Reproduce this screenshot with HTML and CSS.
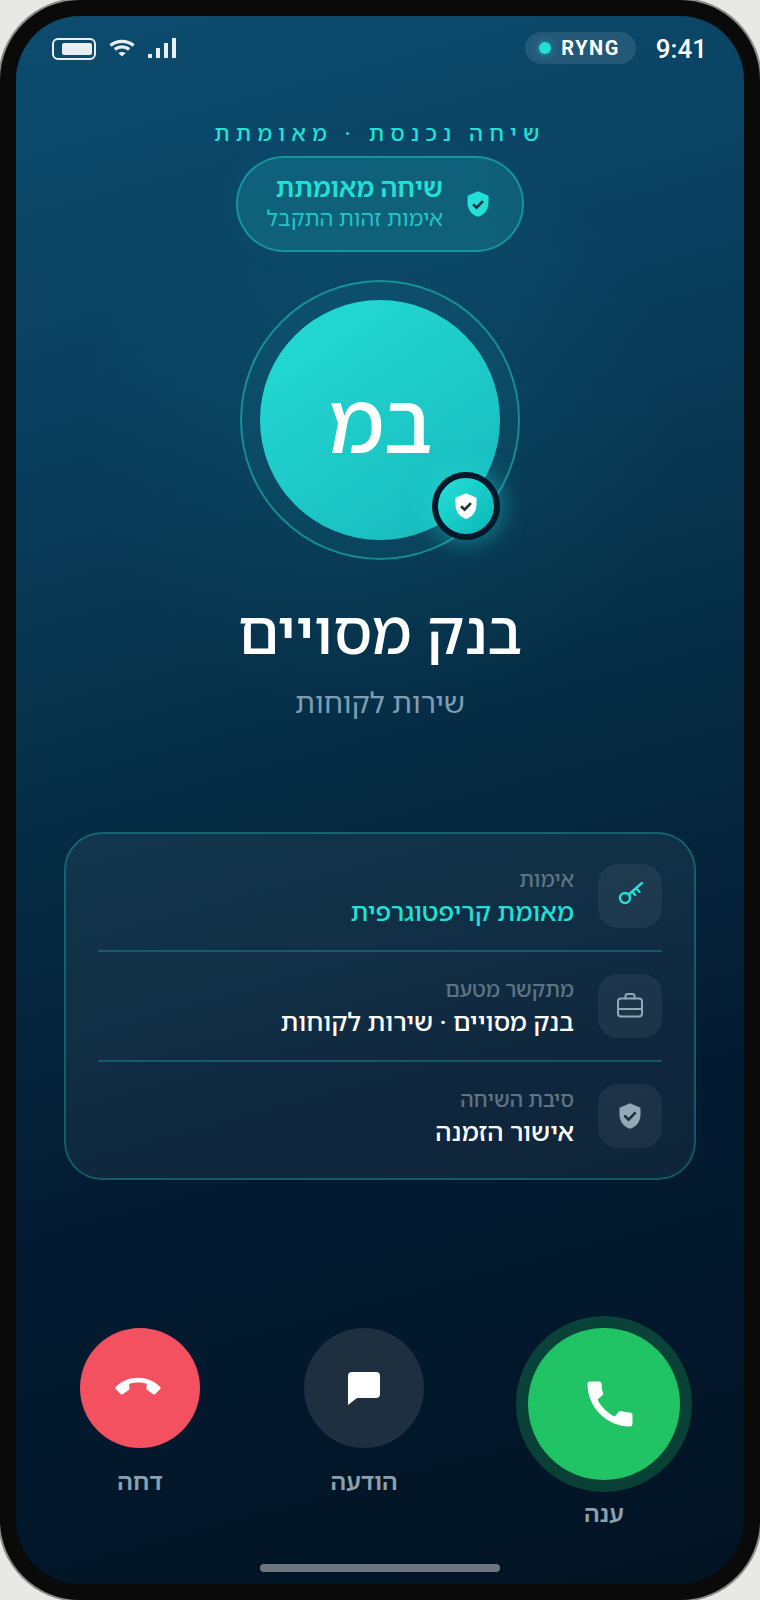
FILE: index.html
```html
<!DOCTYPE html>
<html lang="he" dir="rtl">
<head>
  <meta charset="UTF-8" />
  <title>שיחה נכנסת</title>
  <link rel="stylesheet" href="styles.css">
</head>
<body>
  <div class="phone">
    <div class="screen">
      <div class="status-bar">
        <span class="time">9:41</span>
        <div class="ryng-pill" dir="ltr">
          <span class="ryng-dot"></span>
          <span class="ryng-name">RYNG</span>
        </div>
        <div class="status-icons" dir="ltr">
          <div class="battery"><span class="battery-level"></span></div>
          <svg class="wifi" width="26" height="18" viewBox="0 0 26 18">
            <path d="M1.5 6.6C7.8 1 18.2 1 24.500 6.6" />
            <path d="M5.800 10.400C10 7 16 7 20.200 10.400" />
            <path class="wifi-dot" d="M13 17.500L9.300 14C11.500 12.500 14.500 12.500 16.700 14Z" />
          </svg>
          <div class="signal">
            <span class="bar bar-1"></span>
            <span class="bar bar-2"></span>
            <span class="bar bar-3"></span>
            <span class="bar bar-4"></span>
          </div>
        </div>
      </div>

      <div class="eyebrow">שיחה נכנסת · מאומתת</div>

      <div class="verified-pill">
        <svg class="shield" width="28" height="28" viewBox="0 0 24 24">
          <path class="shield-body" d="M12 1L3 5v6c0 5.550 3.840 10.740 9 12 5.160-1.260 9-6.450 9-12V5z" />
          <path class="shield-check" d="M7.800 12.200l3 3 5.400-5.600" />
        </svg>
        <div class="verified-text">
          <div class="verified-title">שיחה מאומתת</div>
          <div class="verified-sub">אימות זהות התקבל</div>
        </div>
      </div>

      <div class="avatar-ring">
        <div class="avatar">במ</div>
        <div class="avatar-badge">
          <svg class="shield" width="28" height="28" viewBox="0 0 24 24">
            <path class="badge-shield" d="M12 1L3 5v6c0 5.550 3.840 10.740 9 12 5.160-1.260 9-6.450 9-12V5z" />
            <path class="shield-check" d="M7.800 12.200l3 3 5.400-5.600" />
          </svg>
        </div>
      </div>

      <div class="caller-name">בנק מסויים</div>
      <div class="caller-role">שירות לקוחות</div>

      <div class="info-card">
        <div class="info-row">
          <div class="info-icon">
            <svg width="28" height="28" viewBox="0 0 28 28" class="icon-teal">
              <circle cx="9" cy="16" r="5" />
              <path d="M12.700 12.500L26 1M20 6l3.400 3.800M16 9.500l3.200 3.400" />
            </svg>
          </div>
          <div class="info-text">
            <div class="info-label">אימות</div>
            <div class="info-value teal">מאומת קריפטוגרפית</div>
          </div>
        </div>
        <div class="info-row">
          <div class="info-icon">
            <svg width="28" height="28" viewBox="0 0 28 28" class="icon-grey">
              <rect x="2" y="6.500" width="24" height="18" rx="3" />
              <path d="M2 17h24M9.500 6.500V4a2 2 0 0 1 2-2h5a2 2 0 0 1 2 2v2.500" />
            </svg>
          </div>
          <div class="info-text">
            <div class="info-label">מתקשר מטעם</div>
            <div class="info-value">בנק מסויים · שירות לקוחות</div>
          </div>
        </div>
        <div class="info-row">
          <div class="info-icon">
            <svg width="28" height="28" viewBox="0 0 24 24">
              <path class="grey-shield" d="M12 1L3 5v6c0 5.550 3.840 10.740 9 12 5.160-1.260 9-6.450 9-12V5z" />
              <path class="shield-check" d="M7.800 12.200l3 3 5.400-5.600" />
            </svg>
          </div>
          <div class="info-text">
            <div class="info-label">סיבת השיחה</div>
            <div class="info-value">אישור הזמנה</div>
          </div>
        </div>
      </div>

      <div class="actions">
        <div class="action">
          <div class="action-btn answer">
            <svg width="60" height="60" viewBox="-2.400 0 24 24">
              <path class="fill-white" d="M20.010 15.380c-1.230 0-2.420-.2-3.530-.56-.35-.12-.74-.03-1.010.24l-1.570 1.970c-2.830-1.350-5.480-3.900-6.890-6.830l1.950-1.660c.27-.28.35-.67.24-1.020-.37-1.110-.56-2.300-.56-3.530 0-.54-.45-.99-.99-.99H4.190C3.650 3 3 3.240 3 3.990 3 13.280 10.730 21 20.010 21c.71 0 .99-.63.99-1.180v-3.450c0-.54-.45-.99-.99-.99z" />
            </svg>
          </div>
          <span class="action-label">ענה</span>
        </div>
        <div class="action">
          <div class="action-btn message">
            <svg width="32" height="33" viewBox="0 0 32 33">
              <path class="fill-white" d="M4 0h24a4 4 0 0 1 4 4v18a4 4 0 0 1-4 4H9l-9 7V4a4 4 0 0 1 4-4z" />
            </svg>
          </div>
          <span class="action-label">הודעה</span>
        </div>
        <div class="action">
          <div class="action-btn decline">
            <svg class="hangup" width="44" height="44" viewBox="0 0 24 24">
              <path class="fill-white" d="M20.010 15.380c-1.230 0-2.420-.2-3.530-.56-.35-.12-.74-.03-1.010.24l-1.570 1.970c-2.830-1.350-5.480-3.900-6.890-6.830l1.950-1.660c.27-.28.35-.67.24-1.020-.37-1.110-.56-2.300-.56-3.530 0-.54-.45-.99-.99-.99H4.190C3.650 3 3 3.240 3 3.990 3 13.280 10.730 21 20.010 21c.71 0 .99-.63.99-1.180v-3.450c0-.54-.45-.99-.99-.99z" />
            </svg>
          </div>
          <span class="action-label">דחה</span>
        </div>
      </div>

      <div class="home-bar"></div>
    </div>
  </div>
</body>
</html>
```

FILE: styles.css
```css
* { box-sizing: border-box; }
body {
  margin: 0;
  background: #e8e8e5;
  font-family: Roboto, "Noto Sans Hebrew", "Open Sans", sans-serif;
}
.phone {
  width: 760px;
  height: 1600px;
  padding: 16px;
  background: #0a0a0a;
  border-radius: 80px;
  box-shadow: 0 0 0 2px #8c8c8a;
}
.screen {
  height: 100%;
  border-radius: 64px;
  overflow: hidden;
  display: flex;
  flex-direction: column;
  align-items: center;
  background:
    radial-gradient(circle at 50% 26%, rgba(34, 224, 216, 0.07), rgba(34, 224, 216, 0) 300px),
    linear-gradient(165deg, #0c4c6e 0%, #0a4060 22%, #063049 42%, #031c33 68%, #021323 100%);
}

/* status bar */
.status-bar {
  width: 100%;
  height: 48px;
  padding: 16px 37px 0 36px;
  display: flex;
  align-items: center;
}
.time {
  font-size: 26px;
  line-height: 32px;
  font-weight: 500;
  color: #fff;
  margin: 2px 0 0 20px;
}
.ryng-pill {
  display: flex;
  align-items: center;
  gap: 10px;
  height: 32px;
  padding: 0 16px 0 14px;
  border-radius: 16px;
  background: rgba(255, 255, 255, 0.1);
}
.ryng-dot {
  width: 12px;
  height: 12px;
  border-radius: 50%;
  background: #22e0d8;
  box-shadow: 0 0 8px rgba(34, 224, 216, 0.6);
}
.ryng-name {
  font-size: 20px;
  font-weight: 700;
  letter-spacing: 1.5px;
  color: #fff;
}
.status-icons {
  margin-right: auto;
  display: flex;
  align-items: center;
  gap: 13px;
}
.battery {
  width: 44px;
  height: 22px;
  margin-top: 2px;
  border: 2px solid #e8eef2;
  border-radius: 6px;
  padding: 3px 2px;
  display: flex;
  justify-content: flex-end;
}
.battery-level {
  width: 30px;
  border-radius: 2px;
  background: #e8eef2;
}
.wifi path {
  fill: none;
  stroke: #e8eef2;
  stroke-width: 3.400;
}
.wifi .wifi-dot {
  fill: #e8eef2;
  stroke: none;
}
.signal {
  display: flex;
  align-items: flex-end;
  gap: 4px;
  height: 20px;
}
.bar {
  width: 4px;
  background: #e8eef2;
}
.bar-1 { height: 4px; }
.bar-2 { height: 10px; }
.bar-3 { height: 15px; }
.bar-4 { height: 20px; }

/* verified header */
.eyebrow {
  margin-top: 48px;
  font-size: 22px;
  line-height: 44px;
  font-weight: 500;
  letter-spacing: 6.200px;
  color: #22e0d8;
}
.verified-pill {
  width: 288px;
  height: 96px;
  padding: 0 30px 0 10px;
  display: flex;
  align-items: center;
  gap: 21px;
  border: 2px solid rgba(34, 224, 216, 0.4);
  border-radius: 48px;
  background: rgba(34, 224, 216, 0.18);
  box-shadow: 0 0 30px rgba(34, 224, 216, 0.06);
}
.shield { flex: none; }
.shield-body { fill: #22e0d8; }
.badge-shield { fill: #fff; }
.grey-shield { fill: #93a9b5; }
.shield-check {
  fill: none;
  stroke: #1d2f3c;
  stroke-width: 2.200;
}
.verified-text {
  margin-top: -2px;
  white-space: nowrap;
}
.verified-title {
  font-size: 26px;
  line-height: 32px;
  font-weight: 600;
  color: #22e0d8;
}
.verified-sub {
  font-size: 22px;
  line-height: 30px;
  color: #22c4c6;
}

/* avatar */
.avatar-ring {
  position: relative;
  margin-top: 28px;
  width: 280px;
  height: 280px;
  padding: 18px;
  border: 2px solid rgba(34, 224, 216, 0.45);
  border-radius: 50%;
  background: rgba(34, 224, 216, 0.06);
}
.avatar {
  width: 240px;
  height: 240px;
  border-radius: 50%;
  display: flex;
  align-items: center;
  justify-content: center;
  font-size: 84px;
  font-weight: 500;
  color: #fff;
  background: linear-gradient(145deg, #24ddd5, #18b8bc);
}
.avatar-badge {
  position: absolute;
  left: 190px;
  top: 190px;
  width: 68px;
  height: 68px;
  display: flex;
  align-items: center;
  justify-content: center;
  border: 6px solid #04182b;
  border-radius: 50%;
  background: linear-gradient(135deg, #25e2d9, #0ab5b8);
  box-shadow: 0 0 26px rgba(34, 224, 216, 0.55);
}

/* caller */
.caller-name {
  margin-top: 36px;
  font-size: 60px;
  line-height: 76px;
  font-weight: 500;
  color: #fff;
}
.caller-role {
  margin-top: 10px;
  font-size: 29px;
  line-height: 42px;
  color: #7f9db3;
}

/* info card */
.info-card {
  margin-top: 108px;
  width: 632px;
  height: 348px;
  padding: 8px 32px;
  border: 2px solid rgba(34, 224, 216, 0.28);
  border-radius: 38px;
  background: rgba(255, 255, 255, 0.05);
}
.info-row {
  display: flex;
  align-items: center;
  gap: 24px;
  padding: 22px 0;
  border-bottom: 2px solid rgba(34, 224, 216, 0.25);
}
.info-row:last-child { border-bottom: 0; }
.info-icon {
  flex: none;
  width: 64px;
  height: 64px;
  display: flex;
  align-items: center;
  justify-content: center;
  border-radius: 20px;
  background: rgba(255, 255, 255, 0.06);
}
.info-icon svg * {
  stroke-linecap: round;
}
.icon-teal * {
  fill: none;
  stroke: #22e0d8;
  stroke-width: 2.400;
}
.icon-grey * {
  fill: none;
  stroke: #93a9b5;
  stroke-width: 2;
}
.info-text {
  height: 64px;
  padding-top: 1px;
}
.info-label {
  font-size: 21px;
  line-height: 30px;
  font-weight: 500;
  color: #5f7382;
}
.info-value {
  font-size: 25.500px;
  line-height: 34px;
  font-weight: 500;
  color: #fff;
}
.info-value.teal { color: #22e0d8; }

/* actions */
.actions {
  margin-top: 148px;
  width: 600px;
  display: flex;
  justify-content: space-between;
  align-items: flex-start;
}
.action {
  display: flex;
  flex-direction: column;
  align-items: center;
  gap: 16px;
}
.action-btn {
  width: 120px;
  height: 120px;
  border-radius: 50%;
  display: flex;
  align-items: center;
  justify-content: center;
}
.action-btn.answer {
  width: 152px;
  height: 152px;
  background: #20c464;
  box-shadow: 0 0 0 12px rgba(32, 196, 100, 0.25);
}
.action-btn.message { background: #1e2f3f; }
.action-btn.decline { background: #f35060; }
.hangup { transform: translateX(-2px) rotate(135deg); }
.fill-white { fill: #fff; }
.action-label {
  font-size: 24px;
  line-height: 36px;
  font-weight: 600;
  color: #8ba0ad;
}
.home-bar {
  margin-top: auto;
  margin-bottom: 12px;
  width: 240px;
  height: 8px;
  flex: none;
  border-radius: 4px;
  background: #6b7680;
}
```
